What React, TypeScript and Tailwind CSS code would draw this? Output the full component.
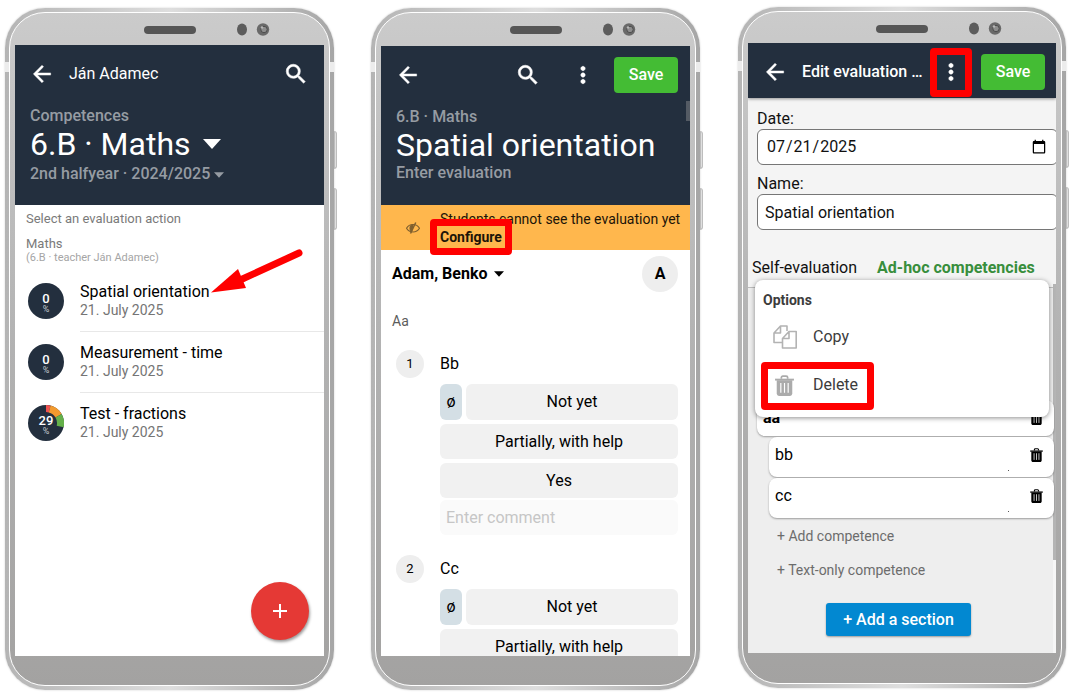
import type { ReactNode } from 'react'
import { MdArrowBack, MdMoreVert, MdSearch } from 'react-icons/md'
import clsx from 'clsx'

const evaluations = [
  { title: 'Spatial orientation', date: '21. July 2025', percent: 0 },
  { title: 'Measurement - time', date: '21. July 2025', percent: 0 },
  { title: 'Test - fractions', date: '21. July 2025', percent: 29 },
]

const competences = [
  { no: 1, name: 'Bb', grades: ['Partially, with help', 'Yes'], comment: true },
  { no: 2, name: 'Cc', grades: ['Partially, with help'], comment: false },
]

function Phone({ children, className, bezel }: { children: ReactNode; className?: string; bezel: string }) {
  return (
    <div className={clsx('relative flex min-h-0 min-w-0 rounded-[40px] bg-linear-to-r from-[#b4b4b4] via-[#dedede] to-[#a6a6a6] p-1 shadow-[0_0_2px_#c8c8c8]', className)}>
      {/* side buttons */}
      <span className="absolute top-[123px] -right-[3px] h-[38px] w-[3px] rounded-r-sm border border-[#bdbdbd] bg-[#e0e0e0]" />
      <span className="absolute top-[180px] -right-[3px] h-[42px] w-[3px] rounded-r-sm border border-[#bdbdbd] bg-[#e0e0e0]" />
      {/* antenna bands */}
      <span className="absolute top-[54px] left-0 h-2.5 w-1 bg-[#ececec]" />
      <span className="absolute top-[54px] right-0 h-2.5 w-1 bg-[#ececec]" />
      <div className={clsx('flex min-w-0 flex-1 flex-col rounded-[36px] border border-white bg-linear-to-b from-[#cbcbcb] via-[#b2b2b2] to-[#a3a2a1] px-[5px]', bezel)}>
        <span className="absolute top-[18px] left-1/2 h-2 w-[52px] -translate-x-1/2 rounded-full bg-[#565656]" />
        <svg className="absolute top-[14px] right-[62px]" width="38" height="15" viewBox="0 0 38 15">
          <ellipse cx="8" cy="7.5" rx="5" ry="6" fill="#5c5c5c" />
          <circle cx="29" cy="7.5" r="6.2" fill="#696969" />
          <circle cx="30" cy="7.5" r="3.2" fill="#8d8d8d" stroke="#4d4d4d" />
          <circle cx="28" cy="5.5" r="1.2" fill="#b8b8b8" />
        </svg>
        <div className="relative flex min-h-0 flex-1 flex-col overflow-hidden bg-white">{children}</div>
      </div>
    </div>
  )
}

function Caret({ className }: { className: string }) {
  return (
    <svg className={clsx('inline-block fill-current align-middle', className)} viewBox="0 0 18 10">
      <path d="M0 0h18L9 10z" />
    </svg>
  )
}

function BackButton() {
  return (
    <button type="button" aria-label="Back">
      <MdArrowBack className="size-[26px] [&>path:last-child]:stroke-[0.4]" />
    </button>
  )
}

function SearchButton() {
  return (
    <button type="button" aria-label="Search">
      <MdSearch className="size-[26px] [&>path:last-child]:stroke-[0.5]" />
    </button>
  )
}

function SaveButton() {
  return (
    <button type="button" className="h-9 w-16 shrink-0 rounded-sm bg-[#44bc34] text-base font-medium text-white">
      Save
    </button>
  )
}

function TrashIcon({ className }: { className: string }) {
  return (
    <svg className={className} viewBox="0 0 18 20" fill="none" stroke="currentColor">
      <path d="M6 3.6V2.4C6 1.6 6.6 1 7.4 1h3.2c.8 0 1.4.6 1.4 1.4v1.2" strokeWidth="1.6" />
      <path d="M0 4.4h18" strokeWidth="1.8" />
      <path d="M1.6 5h14.8v12.4c0 1.4-1 2.6-2.4 2.6H4c-1.4 0-2.4-1.2-2.4-2.6z" fill="currentColor" stroke="none" />
      <path d="M5.5 7.5v9.5M9 7.5v9.5M12.5 7.5v9.5" stroke="#fff" strokeWidth="1.1" />
    </svg>
  )
}

/** Red frame drawn around the control that should be tapped. */
function Highlight({ className }: { className: string }) {
  return <span className={clsx('pointer-events-none absolute rounded-sm border-[7px] border-[#ff0000]', className)} />
}

function PercentBadge({ percent }: { percent: number }) {
  return (
    <div className="relative mb-0.5 flex size-9 shrink-0 flex-col items-center justify-center rounded-full bg-[#232f3e] pt-1 text-white">
      {percent > 0 && (
        <svg className="absolute inset-0" viewBox="0 0 36 36">
          <path d="M18 0A18 18 0 0 1 22.6 .6L20.8 7.4A11 11 0 0 0 18 7z" fill="#ef5350" />
          <path d="M22.6 .6A18 18 0 0 1 33.6 9L27.5 12.5A11 11 0 0 0 20.8 7.4z" fill="#f29a2e" />
          <path d="M33.6 9A18 18 0 0 1 35.6 22.2L28.7 20.7A11 11 0 0 0 27.5 12.5z" fill="#64b04a" />
        </svg>
      )}
      <span className="relative text-[13px] leading-3 font-medium">{percent}</span>
      <span className="text-[9px] leading-2 text-[#c5c9cd]">%</span>
    </div>
  )
}

function EvaluationList() {
  return (
    <Phone bezel="pt-8 pb-[29px]">
      <header className="h-40 shrink-0 bg-[#232f3e] text-white">
        <div className="flex h-[58px] items-center gap-3.5 pr-[15px] pl-3.5">
          <BackButton />
          <span className="flex-1 text-base">Ján Adamec</span>
          <SearchButton />
        </div>
        <div className="px-[15px] pt-[3px] font-medium text-[#969ca3]">
          <p className="text-base leading-5">Competences</p>
          <h1 className="mb-0.5 flex items-center gap-3 text-[32px] leading-9 font-normal text-white">
            6.B · Maths <Caret className="h-2.5 w-[18px]" />
          </h1>
          <p className="text-base leading-5">
            2nd halfyear · 2024/2025 <Caret className="h-1.5 w-2.5" />
          </p>
        </div>
      </header>

      <div className="px-[11px] pt-1 text-[13px] text-[#7a7a7a]">
        <p className="leading-5">Select an evaluation action</p>
        <p className="pt-[7px] leading-4">Maths</p>
        <p className="text-[11px] leading-3 text-[#a5a5a5]">(6.B · teacher Ján Adamec)</p>
      </div>

      <ul className="pt-[7px] pl-[13px]">
        {evaluations.map((item, i) => (
          <li key={item.title} className="relative flex items-center gap-4">
            <PercentBadge percent={item.percent} />
            <div className={clsx('h-[61px] flex-1 border-b pt-[11px]', i < evaluations.length - 1 ? 'border-[#e8e8e8]' : 'border-transparent')}>
              <p className="text-base leading-5 text-black">{item.title}</p>
              <p className="text-sm leading-4 text-[#757575]">{item.date}</p>
            </div>
            {i === 0 && (
              <svg className="absolute -top-6 left-[182px]" width="96" height="52" viewBox="0 0 96 52">
                <path d="M89 6 28 34" stroke="#f00" strokeWidth="7" strokeLinecap="round" />
                <path d="M1 45.500 28 22l8 19z" fill="#f00" />
              </svg>
            )}
          </li>
        ))}
      </ul>

      <button
        type="button"
        aria-label="Add"
        className="absolute right-[15px] bottom-4 flex size-[58px] items-center justify-center rounded-full bg-[#e53935] shadow-[1px_2px_3px_rgba(0,0,0,0.4)]"
      >
        <svg width="16" height="16" viewBox="0 0 16 16" stroke="#fff" strokeWidth="2">
          <path d="M8 1v14M1 8h14" />
        </svg>
      </button>
    </Phone>
  )
}

function CompetenceItem({ no, name, grades, comment }: (typeof competences)[number]) {
  return (
    <section className="flex gap-4 pl-1">
      <span className="flex size-7 shrink-0 items-center justify-center rounded-full bg-[#eee] text-[13px]">{no}</span>
      <div className="flex-1">
        <h3 className="mb-1.5 text-base leading-7">{name}</h3>
        <div className="flex flex-col gap-1">
          <div className="flex gap-1">
            <button type="button" className="h-9 w-[22px] shrink-0 rounded-md bg-[#d4dfe5] text-base">ø</button>
            <button type="button" className="h-9 w-full rounded-md bg-[#f1f1f1] text-base">Not yet</button>
          </div>
          {grades.map((grade) => (
            <button key={grade} type="button" className="h-[35px] w-full rounded-md bg-[#f1f1f1] text-base">
              {grade}
            </button>
          ))}
        </div>
        {comment && (
          <input
            aria-label={`Comment for ${name}`}
            placeholder="Enter comment"
            className="mt-0.5 block h-[35px] w-full rounded-md bg-[#fafafa] px-1.5 text-base placeholder:text-[#c6c6c6]"
          />
        )}
      </div>
    </section>
  )
}

function EnterEvaluation() {
  return (
    <Phone bezel="pt-[33px] pb-[29px]">
      <header className="relative h-[159px] shrink-0 bg-[#232f3e] text-white">
        <div className="flex h-[58px] items-center pr-3 pl-3.5">
          <BackButton />
          <div className="flex flex-1 items-center justify-end gap-[29px] pr-[18px]">
            <SearchButton />
            <button type="button" aria-label="More">
              <MdMoreVert className="size-[26px] [&>path:last-child]:stroke-[0.5]" />
            </button>
          </div>
          <SaveButton />
        </div>
        <div className="px-[15px] pt-[3px] font-medium text-[#969ca3]">
          <p className="text-base leading-5">6.B · Maths</p>
          <h1 className="text-[32px] leading-9 font-normal whitespace-nowrap text-white">Spatial orientation</h1>
          <p className="text-base leading-5">Enter evaluation</p>
        </div>
        <span className="absolute top-[55px] right-0 h-5 w-1 bg-[#545b64]" />
      </header>

      <div className="flex h-[45px] shrink-0 items-center bg-[#ffb74d] pl-[25px] text-sm leading-[18px] text-[#1c1408]">
        <svg className="mr-5 w-3.5 shrink-0" viewBox="0 0 28 24" fill="none" stroke="#80602f" strokeWidth="2.4">
          <path d="M1 12.500C4 7.500 8.500 5 14 5s10 2.500 13 7.500C24 17.500 19.500 20 14 20S4 17.500 1 12.500z" />
          <path d="M14 5.500c-4 0-6 3-6 7 0 2.500 1 5 3 6.500z" fill="#80602f" />
          <path d="M19.500 1 9 23" strokeWidth="3" />
        </svg>
        <div className="flex-1 whitespace-nowrap">
          <p>Students cannot see the evaluation yet</p>
          <a href="#configure" className="relative font-bold">
            Configure
            <Highlight className="-inset-x-2.5 -inset-y-2.5" />
          </a>
        </div>
      </div>

      <div className="flex flex-col pt-1.5 pr-3 pl-[11px] text-black">
        <div className="flex items-center justify-between">
          <button type="button" className="flex items-center gap-1.5 text-base font-bold">
            Adam, Benko <Caret className="h-1.5 w-2.5" />
          </button>
          <span className="flex size-9 items-center justify-center rounded-full bg-[#eee] text-base font-bold">A</span>
        </div>
        <h2 className="py-[19px] text-sm leading-5 text-[#5c5c5c]">Aa</h2>
        <div className="flex flex-col gap-5">
          {competences.map((c) => (
            <CompetenceItem key={c.no} {...c} />
          ))}
        </div>
      </div>
    </Phone>
  )
}

function CompetenceRow({ name }: { name: string }) {
  return (
    <li className="relative ml-3 flex h-10 items-center justify-between rounded-lg bg-white pr-[11px] pb-[5px] pl-1.5 text-base shadow-[0_1px_2px_rgba(0,0,0,0.35)]">
      {name}
      <span className="absolute right-[45px] bottom-1.5 size-px bg-[#555]" />
      <button type="button" aria-label={`Delete ${name}`}>
        <TrashIcon className="h-3.5 w-[13px]" />
      </button>
    </li>
  )
}

function EditEvaluation() {
  return (
    <Phone className="-mt-px mb-0.5 ml-px" bezel="pt-[31px] pb-[30px]">
      <header className="z-10 flex h-[55px] shrink-0 items-center bg-[#232f3e] pt-[3px] pr-[11px] pl-3.5 text-white shadow-[0_1px_3px_rgba(0,0,0,0.4)]">
        <BackButton />
        <span className="ml-3.5 flex-1 truncate text-base font-medium">Edit evaluation …</span>
        <button type="button" aria-label="More" className="relative mr-[17px] ml-[15px]">
          <MdMoreVert className="size-[26px] [&>path:last-child]:stroke-[0.5]" />
          <Highlight className="-inset-x-2 -top-[11px] -bottom-3" />
        </button>
        <SaveButton />
      </header>

      <form className="bg-[#f4f4f4] text-base text-[#111]">
        <div className="-mr-0.5 flex flex-col gap-[9px] pt-[11px] pl-[9px]">
          <label className="block leading-5">
            Date:
            <input
              type="date"
              defaultValue="2025-07-21"
              className="block h-9 w-full rounded-md border border-[#767676] bg-white px-2"
            />
          </label>
          <label className="block leading-5">
            Name:
            <input
              type="text"
              defaultValue="Spatial orientation"
              className="block h-9 w-full rounded-md border border-[#767676] bg-white px-[7px]"
            />
          </label>
        </div>
        <nav className="flex h-[58px] items-end gap-5 border-b border-[#bdbdbd] pb-[9px] pl-1 leading-5 whitespace-nowrap">
          <a href="#self">Self-evaluation</a>
          <a href="#adhoc" className="font-bold text-[#388e3c]">Ad-hoc competencies</a>
        </nav>
      </form>

      <div className="relative flex-1 bg-[#eee] pt-28 pr-0.5 pl-[9px] text-black">
        {/* scrollbar */}
        <span className="absolute inset-y-0 right-0 w-[3px] bg-[#f6f6f6]" />
        <span className="absolute -top-1 right-0 h-[276px] w-[3px] bg-[#b4b4b4]" />
        <ul className="relative flex flex-col gap-px">
          <li className="flex h-9 items-center justify-between rounded-lg bg-white pr-[11px] pl-1.5 text-base font-bold shadow-[0_1px_2px_rgba(0,0,0,0.35)]">
            aa
            <button type="button" aria-label="Delete aa">
              <TrashIcon className="h-3.5 w-[13px]" />
            </button>
          </li>
          <CompetenceRow name="bb" />
          <CompetenceRow name="cc" />
        </ul>
        <div className="flex flex-col items-start gap-3.5 pt-2 pl-5 text-sm leading-5 text-[#6c6c6c]">
          <button type="button">+ Add competence</button>
          <button type="button">+ Text-only competence</button>
        </div>
        <div className="flex justify-center pt-[23px] pr-3.5">
          <button type="button" className="h-[33px] w-[145px] rounded-[3px] bg-[#0288d1] text-base font-medium text-white shadow-[0_1px_2px_rgba(0,0,0,0.35)]">
            + Add a section
          </button>
        </div>
      </div>

      <div className="absolute inset-x-[7px] top-[237px] h-[137px] rounded-lg bg-white text-[#3c3c3c] shadow-[0_1px_5px_rgba(0,0,0,0.45)]">
        <h2 className="px-2 pt-2.5 text-sm leading-5 font-bold">Options</h2>
        <button type="button" className="mt-[3px] flex h-12 w-full items-center pl-[18px] text-base">
          <svg className="mr-4 size-6" viewBox="0 0 24 24" fill="none" stroke="#b3b3b3" strokeWidth="1.6" strokeLinejoin="round">
            <path d="M9 17.500H1V8l6.500-7H14v5M7.500 1v7H1" />
            <path d="M9.500 13.500 16 6.500h7.200V23H9.500zM16 6.500v7H9.500" />
          </svg>
          Copy
        </button>
        <button type="button" className="relative flex h-12 items-center pl-5 text-base">
          <TrashIcon className="mr-[19px] h-[21px] w-[19px] text-[#ababab]" />
          Delete
          <Highlight className="top-px -right-4 -bottom-px left-1.5" />
        </button>
      </div>
    </Phone>
  )
}

export default function App() {
  return (
    <main className="grid h-screen min-h-[600px] grid-cols-3 grid-rows-1 gap-[37px] bg-white px-[5px] pt-2 pb-[3px] font-['Roboto',sans-serif]">
      <EvaluationList />
      <EnterEvaluation />
      <EditEvaluation />
    </main>
  )
}
